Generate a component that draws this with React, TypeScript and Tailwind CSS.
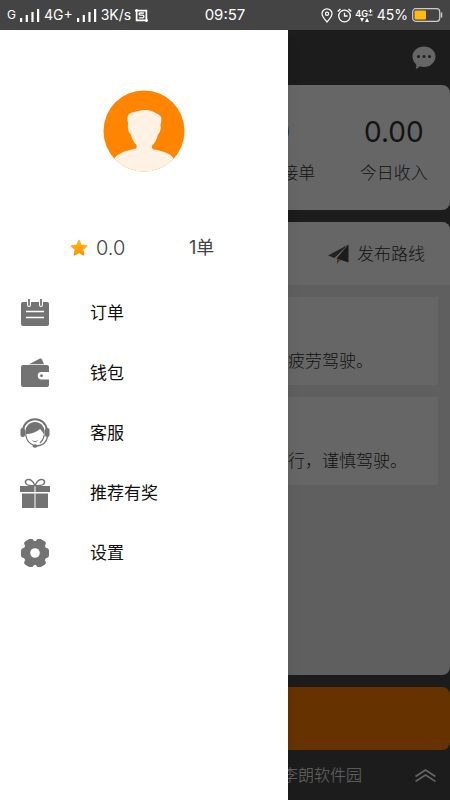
import type { ReactNode } from "react";

const menu: { label: string; icon: ReactNode }[] = [
  { label: "订单", icon: <OrderIcon /> },
  { label: "钱包", icon: <WalletIcon /> },
  { label: "客服", icon: <SupportIcon /> },
  { label: "推荐有奖", icon: <GiftIcon /> },
  { label: "设置", icon: <GearIcon /> },
];

const tips = ["疲劳驾驶。", "行，谨慎驾驶。"];

const stats = [
  { label: "今日接单", value: "0" },
  { label: "今日收入", value: "0.00" },
];

function OrderIcon() {
  return (
    <svg viewBox="0 0 28 28" className="size-7">
      <rect x="0" y="3" width="28" height="24" rx="2" fill="#737373" />
      <path d="M5 12.5h18M5 18.5h18" stroke="#fff" strokeWidth="1.4" />
      <path d="M8 1v5M20 1v5" stroke="#fff" strokeWidth="4" strokeLinecap="round" />
      <path d="M8 0v6M20 0v6" stroke="#737373" strokeWidth="1.8" strokeLinecap="round" />
    </svg>
  );
}

function WalletIcon() {
  return (
    <svg viewBox="0 0 28 30" className="h-[30px] w-7" fill="#737373">
      <path d="M8 6.200 18.500 .8c1-.5 2-.2 2.500 .6L23 6.200z" />
      <path d="M2 7h24a2 2 0 0 1 2 2v5h-7.500a3.500 3.500 0 0 0 0 7.500H28V27a2 2 0 0 1-2 2H2a2 2 0 0 1-2-2V9a2 2 0 0 1 2-2z" />
      <circle cx="20.500" cy="17.700" r="1.400" />
    </svg>
  );
}

function SupportIcon() {
  return (
    <svg viewBox="0 0 30 30" className="size-[30px]">
      <path d="M3 12C4 5 9 1.200 15 1.200S26 5 27 12" fill="none" stroke="#737373" strokeWidth="2" />
      <rect x=".5" y="10" width="4.500" height="9" rx="2" fill="#737373" />
      <rect x="25" y="10" width="4.500" height="9" rx="2" fill="#737373" />
      <path d="M5.500 18C4 9 9 4 15 4s11 5 9.500 14c-.8-2.500-2.200-4.500-4.500-7-3.500 3-8 4.800-12.500 5-1 0-1.500.8-2 2z" fill="#737373" />
      <path d="M5.800 17c.8 5.500 4 9 8 10.200M24.200 17c-.4 3.500-2 6-4.200 8" fill="none" stroke="#737373" strokeWidth="1.200" />
      <path d="M11.500 21.500c2 2 5 2 7 0-1 3.200-6 3.200-7 0z" fill="#737373" />
      <path d="M27.500 18.500c-.8 5.500-5 9-11 9.500" fill="none" stroke="#737373" strokeWidth="1.400" />
      <ellipse cx="15" cy="28" rx="2.500" ry="1.800" fill="#737373" />
    </svg>
  );
}

function GiftIcon() {
  return (
    <svg viewBox="0 0 30 30" className="size-[30px]" fill="#737373">
      <path d="M0 8h14.500v6H0zM15.500 8H30v6H15.500zM2 15.500h12.500V30H2zM15.500 15.500H28V30H15.500z" />
      <path d="M15 7.500C11.500 7.800 6 7.500 5.500 4.500 5 1.500 9 .5 11.500 2.500c1.800 1.400 2.800 3.300 3.500 5zM15 7.500c3.500.3 9 0 9.500-3C25 1.500 21 .5 18.500 2.500c-1.800 1.400-2.800 3.300-3.500 5z" fill="none" stroke="#737373" strokeWidth="1.500" />
    </svg>
  );
}

function GearIcon() {
  return (
    <svg viewBox="0 0 28 28" className="size-7">
      <g fill="#737373">
        <circle cx="14" cy="14" r="12" />
        <rect x="0" y="9" width="28" height="10" rx="3" />
        <rect x="-1" y="9" width="30" height="10" rx="3" transform="rotate(60 14 14)" />
        <rect x="-1" y="9" width="30" height="10" rx="3" transform="rotate(120 14 14)" />
      </g>
      <circle cx="14" cy="14" r="4.800" fill="#fff" />
    </svg>
  );
}

function Avatar() {
  return (
    <svg viewBox="0 0 82 82" className="size-[82px]">
      <clipPath id="avatar">
        <circle cx="41" cy="41" r="40.500" />
      </clipPath>
      <g clipPath="url(#avatar)">
        <rect width="82" height="82" fill="#ff8400" />
        <path
          d="M25 33c-1.500-7 0-9 4-10.500 4-.5 6-2 12-2.500 7 0 10 2 14.500 4.500 3.500 2 3.500 5 2 10.500 1 3-.5 8-2.500 9.500-1 5-3.500 9-6 11-.5 2 0 3.500 2 4 8 1.500 15 3 19.500 8.500L66 82H16L11.500 68C16 62.500 24 60.500 31.500 59c2-.5 2.500-2 2-4-3-2.500-4.500-6-5.500-10.500-2.500-1.500-3.500-6-3-11.500z"
          fill="#fff2e4"
        />
      </g>
    </svg>
  );
}

function Signal() {
  return (
    <svg viewBox="0 0 20 13" className="h-[13px] w-5" fill="#fff">
      <path d="M0 9h2.200v4H0zM5.700 6h2.200v7H5.700zM11.400 3h2.200v10h-2.200zM17 0h2.200v13H17z" />
    </svg>
  );
}

function StatusBar() {
  return (
    <header className="grid h-[30px] grid-cols-[1fr_auto_1fr] items-center bg-[#444] px-[7px] font-['Inter','Noto_Sans_CJK_SC',sans-serif] text-sm text-white">
      <div className="flex items-center gap-1">
        <span className="text-xs">G</span>
        <Signal />
        <span>4G+</span>
        <Signal />
        <span>3K/s</span>
        <svg viewBox="0 0 12 12" className="size-[13px]" fill="none" stroke="#fff">
          <path d="M0 1.500h10.500V12M1.500 0v10.500H12" strokeWidth="1.600" />
          <path d="M8.200 3.700H4.800q-1 0-1 1t1 1h2.400q1 0 1 1.200t-1 1.200H3.800" strokeWidth="1.200" />
        </svg>
      </div>
      <span className="text-[15px]">09:57</span>
      <div className="flex items-center justify-end gap-1">
        <svg viewBox="0 0 12 15" className="h-[15px] w-3" fill="none" stroke="#fff" strokeWidth="1.200">
          <path d="M6 14C3 10.500 1 8.500 1 5.800a5 5 0 0 1 10 0C11 8.500 9 10.500 6 14z" />
          <circle cx="6" cy="5.800" r="1.600" />
        </svg>
        <svg viewBox="0 0 15 15" className="size-[15px]" fill="none" stroke="#fff" strokeWidth="1.300">
          <circle cx="7.500" cy="8" r="5.800" />
          <path d="M7.500 4.800V8h3M.7 3.500 3.500 1M14.300 3.500 11.500 1" />
        </svg>
        <span className="flex w-[17px] flex-col items-center text-[9px] leading-[9px] font-semibold">
          <span className="flex">
            4G
            <svg viewBox="0 0 5 8" className="h-2 w-[5px]" fill="none" stroke="#fff">
              <path d="M2.500 0v4M.5 2h4M.5 6h4" />
            </svg>
          </span>
          <svg viewBox="0 0 9 4" className="h-1 w-[9px]" fill="#fff">
            <path d="M0 0h4L2 4zM5 4h4L7 0z" />
          </svg>
        </span>
        <span>45%</span>
        <svg viewBox="0 0 31 14" className="h-3.5 w-[31px]">
          <rect x=".7" y=".7" width="27" height="12.600" rx="3" fill="none" stroke="#ccc" strokeWidth="1.200" />
          <rect x="2.500" y="2.500" width="11.500" height="9" rx="1" fill="#ffb90f" />
          <path d="M29.500 4.500v5" stroke="#ccc" strokeWidth="1.500" />
        </svg>
      </div>
    </header>
  );
}

function Home() {
  return (
    <main className="flex flex-1 flex-col overflow-hidden bg-[#464646] text-[17px] font-light text-[#333]">
      <div className="flex h-[55px] items-center justify-end pr-3.5">
        <button aria-label="消息">
          <svg viewBox="0 0 24 24" className="size-6">
            <path d="M12 .5C18.500 .5 23.500 5 23.500 10.500S18.500 21 12 21c-1.800 0-3.200-.3-4.500-.8-1 1.500-2 2.300-3.800 2.800.6-1.500.8-3 .5-4.500C2 16.500.500 13.800.500 10.500.500 5 5.500.500 12 .500z" fill="#fff" />
            <g fill="#464646">
              <circle cx="6.500" cy="10.500" r="1.500" />
              <circle cx="12" cy="10.500" r="1.500" />
              <circle cx="17.500" cy="10.500" r="1.500" />
            </g>
          </svg>
        </button>
      </div>

      <section className="grid h-[125px] grid-cols-4 rounded-lg bg-white pt-6 text-center">
        <div className="col-span-2" />
        {stats.map(({ label, value }) => (
          <div key={label}>
            <div className="font-['Inter',sans-serif] text-[28px] leading-[46px] font-normal">{value}</div>
            <div className="leading-9">{label}</div>
          </div>
        ))}
      </section>

      <section className="mt-3 flex flex-1 flex-col overflow-hidden rounded-lg bg-[#eee]">
        <div className="flex h-[63px] items-center justify-end bg-white pr-[25px]">
          <button className="flex items-center gap-2">
            <svg viewBox="0 0 21 20" className="h-5 w-[21px]">
              <path d="M20.500 .5 0 11.500l6.500 2.500z" fill="#555" />
              <path d="M20.500 .5 8.500 14.500l12 4z" fill="#444" />
              <path d="M9 14.800V20l3.500-4z" fill="#e08040" />
            </svg>
            发布路线
          </button>
        </div>
        <div className="flex flex-col gap-3 p-3">
          {tips.map((tip) => (
            <p key={tip} className="flex h-[88px] items-end bg-white pb-3 pl-[276px] leading-6">
              {tip}
            </p>
          ))}
        </div>
      </section>

      <button aria-label="接单" className="mt-3 h-[63px] rounded-lg bg-[#ff8000]" />

      <footer className="flex h-[50px] items-center justify-between pr-3.5 pl-[282px] text-base text-white">
        李朗软件园
        <button aria-label="展开">
          <svg viewBox="0 0 21 13" className="h-[13px] w-[21px]" fill="none" stroke="#fff" strokeWidth="1.500">
            <path d="M.5 7.500 10.500 1l10 6.500M.5 12.500 10.500 6l10 6.500" />
          </svg>
        </button>
      </footer>
    </main>
  );
}

function Drawer() {
  return (
    <aside className="absolute inset-y-0 left-0 w-[64%] bg-white shadow-lg">
      <div className="flex justify-center pt-[60px]">
        <Avatar />
      </div>

      <div className="mt-[60px] grid grid-cols-2 items-center pl-[70px] font-['Inter','Noto_Sans_CJK_SC',sans-serif] text-[#444]">
        <div className="flex items-center gap-2 text-xl leading-8 font-light">
          <svg viewBox="0 0 18 18" className="size-[18px]">
            <linearGradient id="star" x2="0" y2="1">
              <stop stopColor="#ffbe1a" />
              <stop offset="1" stopColor="#ff9000" />
            </linearGradient>
            <path
              d="M9 1.500 11.200 6.200l5.300.7-3.900 3.600 1 5.300L9 13.200l-4.600 2.600 1-5.300L1.500 6.900l5.300-.7z"
              fill="url(#star)"
              stroke="url(#star)"
              strokeWidth="1.500"
              strokeLinejoin="round"
            />
          </svg>
          0.0
        </div>
        <div className="pl-2.5 text-lg leading-8">1单</div>
      </div>

      <nav className="mt-[19px]">
        {menu.map(({ label, icon }) => (
          <a key={label} href="#" className="flex h-[60px] items-center gap-10 pl-5 text-[17px] text-[#111]">
            <span className="flex w-[30px] justify-center">{icon}</span>
            {label}
          </a>
        ))}
      </nav>
    </aside>
  );
}

export default function App() {
  return (
    <div className="flex min-h-screen flex-col font-['Noto_Sans','Noto_Sans_CJK_SC',sans-serif]">
      <StatusBar />
      <div className="relative flex flex-1 flex-col">
        <Home />
        <div className="absolute inset-0 bg-black/60" />
        <Drawer />
      </div>
    </div>
  );
}
